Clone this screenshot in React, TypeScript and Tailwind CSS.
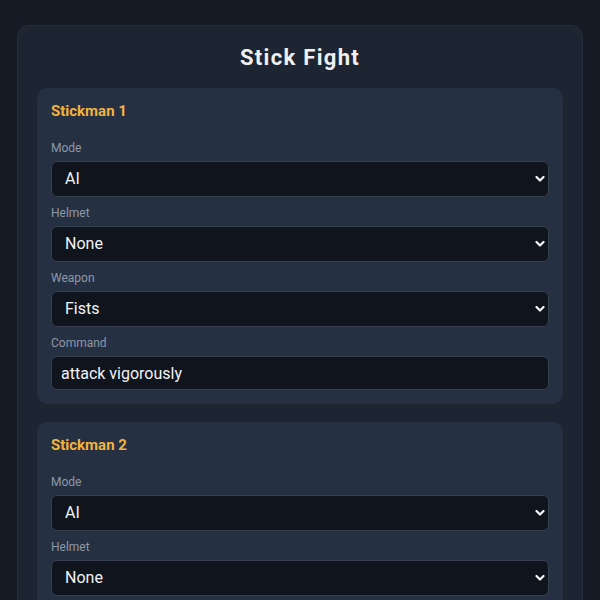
import { useState } from "react";

type Fighter = {
  name: string;
  mode: string;
  helmet: string;
  weapon: string;
  command: string;
};

const MODES = ["AI", "Human"];
const HELMETS = ["None", "Iron Helmet", "Viking Helmet"];
const WEAPONS = ["Fists", "Sword", "Spear", "Hammer"];

function Chevron() {
  return (
    <svg
      className="pointer-events-none absolute right-[4px] top-1/2 -translate-y-1/2"
      width="10"
      height="7"
      viewBox="0 0 10 7"
      fill="none"
    >
      <path d="M1.5 1.5 L5 5 L8.5 1.5" stroke="#f3f4f6" strokeWidth="2.2" strokeLinecap="round" strokeLinejoin="round" />
    </svg>
  );
}

function Field({ label, children }: { label: string; children: React.ReactNode }) {
  return (
    <div className="flex flex-col">
      <label className="text-[12px] leading-[17px] text-[#8e98a8] mb-1">{label}</label>
      {children}
    </div>
  );
}

function Select({ value, options, onChange }: { value: string; options: string[]; onChange: (v: string) => void }) {
  return (
    <div className="relative">
      <select
        value={value}
        onChange={(e) => onChange(e.target.value)}
        className="w-full h-9 appearance-none rounded-md border border-[#363f50] bg-[#10141d] pl-[13px] pr-6 text-[16px] text-[#f1f3f6] outline-none"
      >
        {options.map((o) => (
          <option key={o}>{o}</option>
        ))}
      </select>
      <Chevron />
    </div>
  );
}

function FighterCard({ f, onChange }: { f: Fighter; onChange: (f: Fighter) => void }) {
  return (
    <div className="rounded-[10px] bg-[#253043] px-[14px] pt-[13px] pb-[14px]">
      <h2 className="text-[15px] leading-[20px] font-bold text-[#f4b33f] mb-[19px]">{f.name}</h2>
      <div className="flex flex-col gap-2">
        <Field label="Mode">
          <Select value={f.mode} options={MODES} onChange={(v) => onChange({ ...f, mode: v })} />
        </Field>
        <Field label="Helmet">
          <Select value={f.helmet} options={HELMETS} onChange={(v) => onChange({ ...f, helmet: v })} />
        </Field>
        <Field label="Weapon">
          <Select value={f.weapon} options={WEAPONS} onChange={(v) => onChange({ ...f, weapon: v })} />
        </Field>
        <Field label="Command">
          <input
            value={f.command}
            onChange={(e) => onChange({ ...f, command: e.target.value })}
            className="w-full h-[34px] rounded-md border border-[#363f50] bg-[#10141d] px-[9px] text-[16px] text-[#f1f3f6] outline-none"
          />
        </Field>
      </div>
    </div>
  );
}

export default function App() {
  const [fighters, setFighters] = useState<Fighter[]>([
    { name: "Stickman 1", mode: "AI", helmet: "None", weapon: "Fists", command: "attack vigorously" },
    { name: "Stickman 2", mode: "AI", helmet: "None", weapon: "Fists", command: "defend carefully" },
  ]);

  return (
    <main
      className="min-h-screen bg-[#151a24] px-[17px] pt-[25px] pb-6"
      style={{ fontFamily: "Roboto, 'Liberation Sans', sans-serif" }}
    >
      <div className="rounded-[12px] border border-[#262e3c] bg-[#1d2432] px-[19px] pt-[19px] pb-5">
        <h1 className="text-center text-[22px] leading-[26px] font-bold tracking-[0.06em] text-[#eef0f4] mb-[17px]">
          Stick Fight
        </h1>
        <div className="flex flex-col gap-[18px]">
          {fighters.map((f, i) => (
            <FighterCard
              key={f.name}
              f={f}
              onChange={(nf) => setFighters(fighters.map((x, j) => (j === i ? nf : x)))}
            />
          ))}
        </div>
      </div>
    </main>
  );
}
